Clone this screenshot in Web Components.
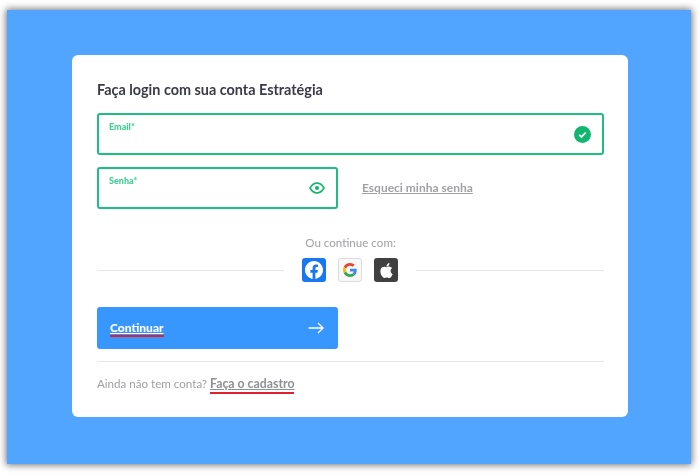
<!DOCTYPE html>
<html lang="pt">
<head>
<meta charset="utf-8">
<title>Login</title>
<style>
  html, body { margin: 0; padding: 0; background: #fff; }
  body { font-family: Lato, "Liberation Sans", sans-serif; }
</style>
</head>
<body>
<login-screen>
  <login-card>
    <text-field label="Email*" wide>
      <svg slot="icon" width="17" height="17" viewBox="0 0 18 18">
        <circle cx="9" cy="9" r="9" fill="#12b76f"/>
        <path d="M5.6 9.4 7.9 11.6 12.4 6.9" fill="none" stroke="#fff" stroke-width="1.8"/>
      </svg>
    </text-field>
    <div slot="password">
      <text-field label="Senha*">
        <svg slot="icon" width="16" height="12" viewBox="0 0 16 12">
          <path d="M1 6C2.8 2.8 5.2 1.1 8 1.1S13.2 2.8 15 6C13.2 9.2 10.8 10.9 8 10.9S2.8 9.2 1 6Z" fill="none" stroke="#12b76f" stroke-width="1.6"/>
          <circle cx="8" cy="6" r="2.1" fill="#12b76f"/>
        </svg>
      </text-field>
    </div>
    <span slot="forgot">Esqueci minha senha</span>
    <social-row slot="social">
      <social-button color="#1877f2">
        <svg width="18" height="18" viewBox="0 0 24 24"><path fill="#fff" d="M24 12.073c0-6.627-5.373-12-12-12s-12 5.373-12 12c0 5.99 4.388 10.954 10.125 11.854v-8.385H7.078v-3.47h3.047V9.43c0-3.007 1.792-4.669 4.533-4.669 1.312 0 2.686.235 2.686.235v2.953H15.83c-1.491 0-1.956.925-1.956 1.874v2.25h3.328l-.532 3.47h-2.796v8.385C19.612 23.027 24 18.062 24 12.073z"/></svg>
      </social-button>
      <social-button color="#f8f8f8" outlined>
        <svg width="14" height="14" viewBox="0 0 48 48">
          <path fill="#ea4335" d="M24 9.5c3.54 0 6.71 1.22 9.21 3.6l6.85-6.85C35.9 2.38 30.47 0 24 0 14.62 0 6.51 5.38 2.56 13.22l7.98 6.19C12.43 13.72 17.74 9.5 24 9.5z"/>
          <path fill="#4285f4" d="M46.98 24.55c0-1.57-.15-3.09-.38-4.55H24v9.02h12.94c-.58 2.96-2.26 5.48-4.78 7.18l7.73 6c4.51-4.18 7.09-10.36 7.09-17.65z"/>
          <path fill="#fbbc05" d="M10.53 28.59c-.48-1.45-.76-2.99-.76-4.59s.27-3.14.76-4.59l-7.98-6.19C.92 16.46 0 20.12 0 24c0 3.88.92 7.54 2.56 10.78l7.97-6.19z"/>
          <path fill="#34a853" d="M24 48c6.48 0 11.93-2.13 15.89-5.81l-7.73-6c-2.15 1.45-4.92 2.3-8.16 2.3-6.26 0-11.57-4.22-13.47-9.91l-7.98 6.19C6.51 42.62 14.62 48 24 48z"/>
        </svg>
      </social-button>
      <social-button color="#404040">
        <svg width="15" height="15" viewBox="0 0 24 24"><path fill="#fff" d="M12.152 6.896c-.948 0-2.415-1.078-3.96-1.04-2.04.027-3.91 1.183-4.961 3.014-2.117 3.675-.546 9.103 1.519 12.09 1.013 1.454 2.208 3.09 3.792 3.039 1.52-.065 2.09-.987 3.935-.987 1.831 0 2.35.987 3.96.948 1.637-.026 2.676-1.48 3.676-2.948 1.156-1.688 1.636-3.325 1.662-3.415-.039-.013-3.182-1.221-3.22-4.857-.026-3.04 2.48-4.494 2.597-4.559-1.429-2.09-3.623-2.324-4.39-2.376-2-.156-3.675 1.09-4.61 1.09zM15.53 3.83c.843-1.012 1.4-2.427 1.245-3.83-1.207.052-2.662.805-3.532 1.818-.78.896-1.454 2.338-1.273 3.714 1.338.104 2.715-.688 3.559-1.701"/></svg>
      </social-button>
    </social-row>
    <submit-button slot="submit">Continuar</submit-button>
  </login-card>
</login-screen>

<script>
class LoginScreen extends HTMLElement {
  constructor() {
    super();
    this.attachShadow({ mode: "open" });
    this.shadowRoot.innerHTML = `
      <style>
        :host {
          display: block;
          box-sizing: border-box;
          margin: 10px 9px 12px 7px;
          padding: 45px 63px 47px 65px;
          height: 454px;
          background: #52a5ff;
          box-shadow: 0 0 7px 1px rgba(0, 0, 0, 0.55);
        }
      </style>
      <slot></slot>
    `;
  }
}

class LoginCard extends HTMLElement {
  constructor() {
    super();
    this.attachShadow({ mode: "open" });
    this.shadowRoot.innerHTML = `
      <style>
        :host {
          display: block;
          box-sizing: border-box;
          height: 362px;
          padding: 25px 24px 0 25px;
          background: #fff;
          border-radius: 6px;
          filter: blur(0.3px);
        }
        h1 {
          margin: 0 0 13px;
          font-size: 14.4px;
          line-height: 20px;
          font-weight: 700;
          color: #3a3a48;
        }
        .stack { display: flex; flex-direction: column; gap: 12px; }
        .password { display: flex; align-items: center; gap: 24px; }
        .password ::slotted(div) { width: 241px; flex: none; }
        .forgot {
          font-size: 12px;
          font-weight: 700;
          color: #a2a2a6;
          text-decoration: underline;
          position: relative;
          top: -1px;
        }
        .or {
          margin-top: 27px;
          text-align: center;
          font-size: 11.6px;
          line-height: 14px;
          color: #a0a0a4;
        }
        .social { display: flex; align-items: center; gap: 18px; margin-top: 8px; }
        .social i { flex: 1; height: 1px; background: #e8e8ea; }
        .social i:first-child { flex: none; width: 187px; }
        .submit { width: 241px; margin-top: 25px; }
        hr { margin: 12px 0 0; border: 0; height: 1px; background: #e8e8ea; }
        p {
          margin: 14px 0 0;
          font-size: 11.6px;
          line-height: 16px;
          color: #a0a0a4;
        }
        p a {
          font-size: 12.3px;
          font-weight: 700;
          color: #909094;
          text-decoration: underline;
          border-bottom: 2px solid #e0202c;
          padding-bottom: 1px;
        }
      </style>
      <h1>Faça login com sua conta Estratégia</h1>
      <div class="stack">
        <slot></slot>
        <div class="password">
          <slot name="password"></slot>
          <span class="forgot"><slot name="forgot"></slot></span>
        </div>
      </div>
      <div class="or">Ou continue com:</div>
      <div class="social"><i></i><slot name="social"></slot><i></i></div>
      <div class="submit"><slot name="submit"></slot></div>
      <hr>
      <p>Ainda não tem conta? <a>Faça o cadastro</a></p>
    `;
  }
}

class TextField extends HTMLElement {
  constructor() {
    super();
    this.attachShadow({ mode: "open" });
    this.shadowRoot.innerHTML = `
      <style>
        :host {
          display: flex;
          align-items: center;
          justify-content: space-between;
          box-sizing: border-box;
          height: 42px;
          padding: 0 11px 0 10px;
          border: 2px solid #1cbf80;
          border-radius: 3px;
          background: #fff;
        }
        label {
          align-self: flex-start;
          margin-top: 6px;
          font-size: 9px;
          line-height: 11px;
          font-weight: 900;
          color: #3fcf90;
        }
        .icon { display: flex; }
      </style>
      <label></label>
      <span class="icon"><slot name="icon"></slot></span>
    `;
  }
  connectedCallback() {
    this.shadowRoot.querySelector("label").textContent = this.getAttribute("label");
  }
}

class SocialRow extends HTMLElement {
  constructor() {
    super();
    this.attachShadow({ mode: "open" });
    this.shadowRoot.innerHTML = `
      <style>:host { display: flex; gap: 12px; }</style>
      <slot></slot>
    `;
  }
}

class SocialButton extends HTMLElement {
  constructor() {
    super();
    this.attachShadow({ mode: "open" });
    this.shadowRoot.innerHTML = `
      <style>
        :host {
          display: flex;
          align-items: center;
          justify-content: center;
          box-sizing: border-box;
          width: 24px;
          height: 24px;
          border-radius: 3px;
        }
        :host([outlined]) { border: 1px solid #dcdcdc; }
      </style>
      <slot></slot>
    `;
  }
  connectedCallback() {
    this.style.background = this.getAttribute("color");
  }
}

class SubmitButton extends HTMLElement {
  constructor() {
    super();
    this.attachShadow({ mode: "open" });
    this.shadowRoot.innerHTML = `
      <style>
        :host {
          display: flex;
          align-items: center;
          justify-content: space-between;
          box-sizing: border-box;
          height: 42px;
          padding: 0 14px 0 13px;
          background: #3797ff;
          border-radius: 3px;
          color: #fff;
          font-size: 12px;
          font-weight: 900;
        }
        .label {
          text-decoration: underline;
          border-bottom: 2px solid #e0202c;
          line-height: 15px;
        }
      </style>
      <span class="label"><slot></slot></span>
      <svg width="16" height="12" viewBox="0 0 16 12" fill="none" stroke="#fff" stroke-width="1.3">
        <path d="M0.5 6H15M10 1 15 6 10 11"/>
      </svg>
    `;
  }
}

customElements.define("login-screen", LoginScreen);
customElements.define("login-card", LoginCard);
customElements.define("text-field", TextField);
customElements.define("social-row", SocialRow);
customElements.define("social-button", SocialButton);
customElements.define("submit-button", SubmitButton);
</script>
</body>
</html>
